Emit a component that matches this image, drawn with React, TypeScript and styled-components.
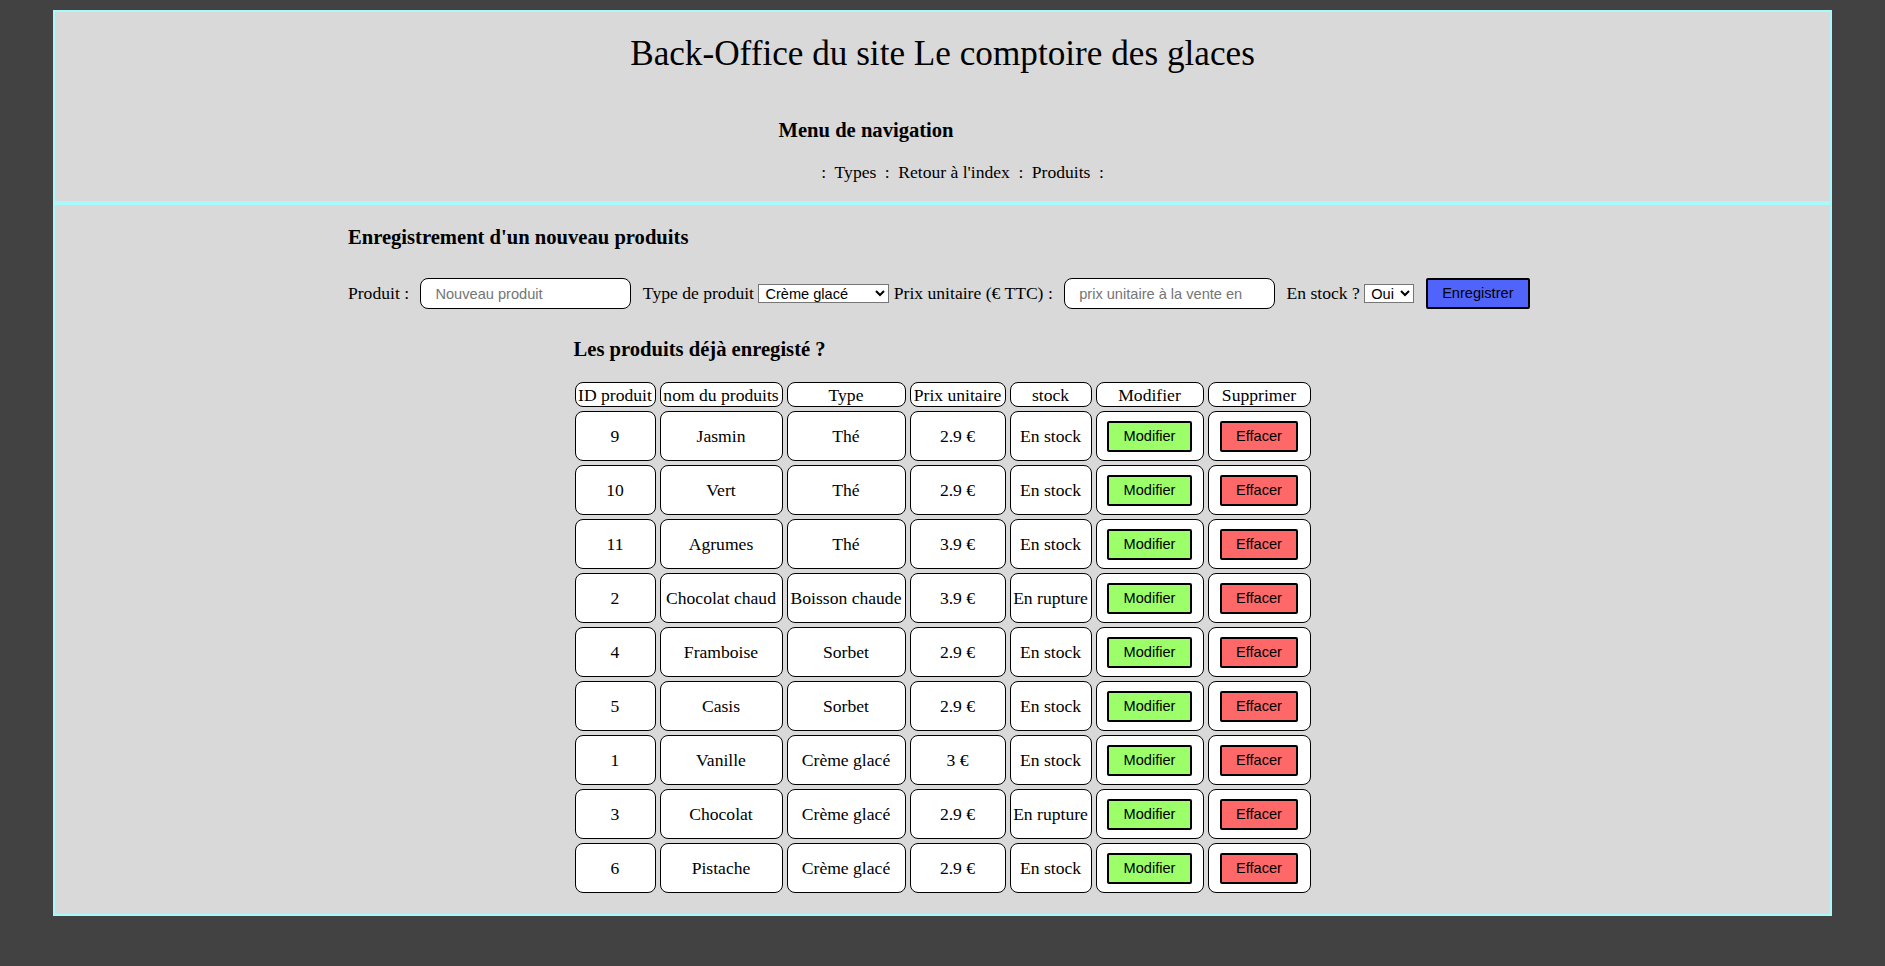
import React from 'react';
import styled, { createGlobalStyle } from 'styled-components';

const GlobalStyle = createGlobalStyle`
  html, body {
    margin: 0;
    padding: 0;
    background: #424242;
  }
  body {
    font-family: "Liberation Serif", "Times New Roman", serif;
    font-size: 17.6px;
    color: #000;
  }
`;

const Frame = styled.div`
  margin: 10px 53px;
  border: 2px solid #a8fafa;
  background: #d9d9d9;
`;

const Header = styled.header`
  display: flex;
  flex-direction: column;
  align-items: center;
  padding: 22px 0 19px;
  border-bottom: 4px solid #a8fafa;
`;

const Title = styled.h1`
  margin: 0;
  font-size: 35.2px;
  line-height: 40px;
  font-weight: normal;
`;

const Nav = styled.nav`
  width: 328px;
  margin-top: 44px;
`;

const Heading = styled.h3<{ $indent?: number }>`
  margin: 0;
  padding-left: ${(p) => p.$indent ?? 0}px;
  font-size: 20.6px;
  line-height: 24px;
  font-weight: bold;
`;

const NavList = styled.ul`
  list-style: none;
  margin: 20px 0 0;
  padding: 0 0 0 40px;
  display: flex;
  justify-content: center;
  gap: 8.5px;
  line-height: 20px;
`;

const Main = styled.main`
  display: flex;
  flex-direction: column;
  align-items: center;
  padding: 20px 0 17px;
`;

const Block = styled.section<{ $gap?: number }>`
  width: fit-content;
  margin-top: ${(p) => p.$gap ?? 0}px;
`;

const Form = styled.form`
  display: flex;
  align-items: center;
  gap: 4.4px;
  height: 31px;
  margin-top: 29px;
  white-space: nowrap;
`;

const TextInput = styled.input`
  width: 211px;
  height: 31px;
  box-sizing: border-box;
  margin: 0 7px;
  padding: 0 14px;
  border: 1px solid #000;
  border-radius: 8px;
  background: #fff;
  font-family: "Liberation Sans", Arial, sans-serif;
  font-size: 14.6px;
  outline: none;

  &::placeholder {
    color: #757575;
  }
`;

const Select = styled.select<{ $w: number }>`
  width: ${(p) => p.$w}px;
  height: 19px;
  padding: 0 0 0 2px;
  border: 1px solid #767676;
  border-radius: 0;
  background: #fff;
  font-family: "Liberation Sans", Arial, sans-serif;
  font-size: 14.6px;
  color: #000;
`;

const tones = {
  save: '#5063fb',
  edit: '#9cff6a',
  remove: '#ff6868',
};

const Button = styled.button<{ $tone: keyof typeof tones }>`
  margin: ${(p) => (p.$tone === 'save' ? '0 7px' : '0')};
  padding: 5px 14.5px;
  border: 2px solid #000;
  border-radius: 2px;
  background: ${(p) => tones[p.$tone]};
  color: #000;
  font-family: "Liberation Sans", Arial, sans-serif;
  font-size: 14.6px;
  line-height: 17px;
  cursor: pointer;
`;

const Table = styled.table`
  border-collapse: separate;
  border-spacing: 4px;
  margin-top: 17px;
`;

const HeadCell = styled.th<{ $w: number }>`
  width: ${(p) => p.$w}px;
  box-sizing: border-box;
  padding: 1.5px 1px;
  border: 1px solid #000;
  border-radius: 8px;
  background: #fff;
  font-weight: normal;
  line-height: 20px;
  white-space: nowrap;
`;

const Cell = styled.td`
  height: 50px;
  box-sizing: border-box;
  padding: 0 1px;
  border: 1px solid #000;
  border-radius: 8px;
  background: #fff;
  text-align: center;
  vertical-align: middle;
  white-space: nowrap;
`;

const columns = [
  { label: 'ID produit', w: 81 },
  { label: 'nom du produits', w: 123 },
  { label: 'Type', w: 119 },
  { label: 'Prix unitaire', w: 96 },
  { label: 'stock', w: 82 },
  { label: 'Modifier', w: 108 },
  { label: 'Supprimer', w: 103 },
];

const produits = [
  { id: 9, nom: 'Jasmin', type: 'Thé', prix: '2.9', stock: true },
  { id: 10, nom: 'Vert', type: 'Thé', prix: '2.9', stock: true },
  { id: 11, nom: 'Agrumes', type: 'Thé', prix: '3.9', stock: true },
  { id: 2, nom: 'Chocolat chaud', type: 'Boisson chaude', prix: '3.9', stock: false },
  { id: 4, nom: 'Framboise', type: 'Sorbet', prix: '2.9', stock: true },
  { id: 5, nom: 'Casis', type: 'Sorbet', prix: '2.9', stock: true },
  { id: 1, nom: 'Vanille', type: 'Crème glacé', prix: '3', stock: true },
  { id: 3, nom: 'Chocolat', type: 'Crème glacé', prix: '2.9', stock: false },
  { id: 6, nom: 'Pistache', type: 'Crème glacé', prix: '2.9', stock: true },
];

export default function App() {
  return (
    <>
      <GlobalStyle />
      <Frame>
        <Header>
          <Title>Back-Office du site Le comptoire des glaces</Title>
          <Nav>
            <Heading>Menu de navigation</Heading>
            <NavList>
              <li>:</li>
              <li>Types</li>
              <li>:</li>
              <li>Retour à l'index</li>
              <li>:</li>
              <li>Produits</li>
              <li>:</li>
            </NavList>
          </Nav>
        </Header>
        <Main>
          <Block>
            <Heading>Enregistrement d'un nouveau produits</Heading>
            <Form onSubmit={(e) => e.preventDefault()}>
              <label>Produit :</label>
              <TextInput type="text" placeholder="Nouveau produit" />
              <label>Type de produit</label>
              <Select $w={131} defaultValue="Crème glacé">
                <option>Crème glacé</option>
                <option>Sorbet</option>
                <option>Thé</option>
                <option>Boisson chaude</option>
              </Select>
              <label>Prix unitaire (€ TTC) :</label>
              <TextInput type="number" placeholder="prix unitaire à la vente en €" />
              <label>En stock ?</label>
              <Select $w={50} defaultValue="Oui">
                <option>Oui</option>
                <option>Non</option>
              </Select>
              <Button $tone="save" type="submit">Enregistrer</Button>
            </Form>
          </Block>
          <Block $gap={28}>
            <Heading $indent={3}>Les produits déjà enregisté ?</Heading>
            <Table>
              <thead>
                <tr>
                  {columns.map((c) => (
                    <HeadCell key={c.label} $w={c.w}>{c.label}</HeadCell>
                  ))}
                </tr>
              </thead>
              <tbody>
                {produits.map((p) => (
                  <tr key={p.id}>
                    <Cell>{p.id}</Cell>
                    <Cell>{p.nom}</Cell>
                    <Cell>{p.type}</Cell>
                    <Cell>{p.prix} €</Cell>
                    <Cell>{p.stock ? 'En stock' : 'En rupture'}</Cell>
                    <Cell>
                      <Button $tone="edit" type="button">Modifier</Button>
                    </Cell>
                    <Cell>
                      <Button $tone="remove" type="button">Effacer</Button>
                    </Cell>
                  </tr>
                ))}
              </tbody>
            </Table>
          </Block>
        </Main>
      </Frame>
    </>
  );
}
